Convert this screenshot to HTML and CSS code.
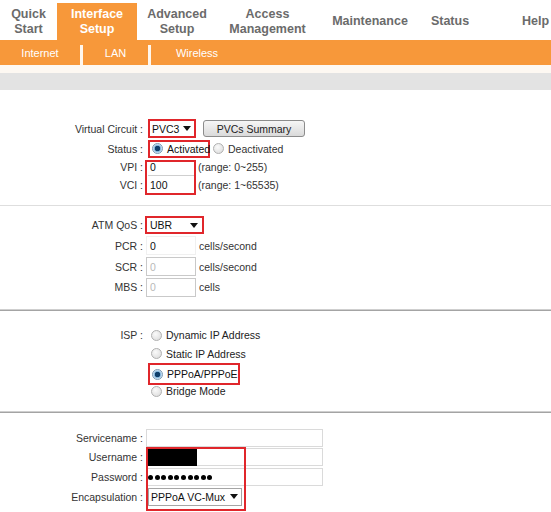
FILE: index.html
```html
<!DOCTYPE html>
<html>
<head>
<meta charset="utf-8">
<link rel="stylesheet" href="styles.css">
</head>
<body>
<div class="topnav">
  <div class="tab t1">Quick<br>Start</div>
  <div class="tab t2 active">Interface<br>Setup</div>
  <div class="tab t3">Advanced<br>Setup</div>
  <div class="tab t4">Access<br>Management</div>
  <div class="tab t5">Maintenance</div>
  <div class="tab t6">Status</div>
  <div class="tab t7">Help</div>
</div>
<div class="subnav">
  <div class="subitem s1">Internet</div>
  <div class="subsep"></div>
  <div class="subitem s2">LAN</div>
  <div class="subsep"></div>
  <div class="subitem s3">Wireless</div>
</div>
<div class="strip"></div>
<div class="graybar"></div>

<div class="sec sec1">
  <div class="row h21">
    <div class="lbl">Virtual Circuit :</div>
    <div class="fld"><div class="sel red vc"><span>PVC3</span><i class="arrow"></i></div><button class="btn">PVCs Summary</button></div>
  </div>
  <div class="row h19">
    <div class="lbl">Status :</div>
    <div class="fld"><span class="redbox status"><span class="radio on"></span>Activated</span><span class="radio deact"></span>Deactivated</div>
  </div>
  <div class="row h18">
    <div class="lbl">VPI :</div>
    <div class="fld"><span class="txt vp top">0</span><span class="hint">(range: 0~255)</span></div>
  </div>
  <div class="row h18">
    <div class="lbl">VCI :</div>
    <div class="fld"><span class="txt vp">100</span><span class="hint">(range: 1~65535)</span></div>
  </div>
  <div class="mark mark-vpi"></div>
</div>

<div class="sec sec2">
  <div class="row h20">
    <div class="lbl">ATM QoS :</div>
    <div class="fld"><div class="sel red qos"><span>UBR</span><i class="arrow"></i></div></div>
  </div>
  <div class="row h21">
    <div class="lbl">PCR :</div>
    <div class="fld"><span class="txt small pcr">0</span><span class="hint">cells/second</span></div>
  </div>
  <div class="row h21">
    <div class="lbl">SCR :</div>
    <div class="fld"><span class="txt small dis">0</span><span class="hint">cells/second</span></div>
  </div>
  <div class="row h20">
    <div class="lbl">MBS :</div>
    <div class="fld"><span class="txt small dis">0</span><span class="hint">cells</span></div>
  </div>
</div>
<div class="sep"></div>

<div class="sec sec3">
  <div class="row h18">
    <div class="lbl">ISP :</div>
    <div class="fld"><span class="opt"><span class="radio"></span>Dynamic IP Address</span></div>
  </div>
  <div class="row h19">
    <div class="lbl"></div>
    <div class="fld"><span class="opt"><span class="radio"></span>Static IP Address</span></div>
  </div>
  <div class="row h19">
    <div class="lbl"></div>
    <div class="fld"><span class="redbox pppoe"><span class="radio on"></span>PPPoA/PPPoE</span></div>
  </div>
  <div class="row h18">
    <div class="lbl"></div>
    <div class="fld"><span class="opt"><span class="radio"></span>Bridge Mode</span></div>
  </div>
</div>
<div class="sep"></div>

<div class="sec sec4">
  <div class="row h19">
    <div class="lbl">Servicename :</div>
    <div class="fld"><span class="txt wide"></span></div>
  </div>
  <div class="row h20">
    <div class="lbl">Username :</div>
    <div class="fld"><span class="txt wide"><span class="blackout"></span></span></div>
  </div>
  <div class="row h20">
    <div class="lbl">Password :</div>
    <div class="fld"><span class="txt wide"><span class="dots"><i></i><i></i><i></i><i></i><i></i><i></i><i></i><i></i><i></i><i></i></span></span></div>
  </div>
  <div class="row h19">
    <div class="lbl">Encapsulation :</div>
    <div class="fld"><div class="sel encap"><span>PPPoA VC-Mux</span><i class="arrow"></i></div></div>
  </div>
  <div class="mark mark-cred"></div>
</div>
</body>
</html>
```

FILE: styles.css
```css
html, body {
  margin: 0;
  padding: 0;
  background: #fff;
}
body {
  width: 551px;
  height: 512px;
  overflow: hidden;
  font-family: "Liberation Sans", Arial, sans-serif;
  font-size: 10.5px;
  color: #333;
}

/* top navigation */
.topnav {
  display: flex;
  height: 40px;
  width: 551px;
  overflow: hidden;
}
.tab {
  display: flex;
  align-items: center;
  justify-content: center;
  text-align: center;
  margin-top: 3px;
  font-weight: bold;
  font-size: 12.5px;
  line-height: 15px;
  color: #6b6b6b;
  flex: none;
}
.tab.active {
  background: #f7983a;
  color: #fff;
}
.t1 { width: 57px; }
.t2 { width: 80px; }
.t3 { width: 80px; }
.t4 { width: 101px; }
.t5 { width: 104px; }
.t6 { width: 56px; }
.t7 {
  width: 73px;
  box-sizing: border-box;
  justify-content: flex-start;
  padding-left: 44px;
}

.subnav {
  display: flex;
  height: 25px;
  background: #f7983a;
}
.subitem {
  display: flex;
  align-items: center;
  justify-content: center;
  color: #fff;
  font-size: 11px;
}
.s1 { width: 80px; }
.s2 { width: 65px; }
.s3 { width: 92px; }
.subsep {
  width: 3px;
  margin-top: 5px;
  background: #fff6ec;
}
.strip {
  height: 8px;
  background: #fdf8f2;
}
.graybar {
  height: 17px;
  background: #e3e3e3;
}

/* form sections */
.sec {
  position: relative;
}
.sec1 {
  padding: 28px 0 11px;
  border-bottom: 1px solid #dedede;
}
.sec2 { padding: 9px 0 12px; }
.sec3 { padding: 15px 0 11px; }
.sec4 { padding: 15px 0 0; }
.sep {
  height: 1px;
  border-top: 1px solid #cfcfcf;
  background: #a4a4a4;
}

.row {
  display: grid;
  grid-template-columns: 146px 1fr;
  align-items: center;
}
.h18 { height: 18px; }
.h19 { height: 19px; }
.h20 { height: 20px; }
.h21 { height: 21px; }
.lbl {
  text-align: right;
  padding-right: 3px;
  white-space: nowrap;
}
.fld {
  display: flex;
  align-items: center;
  white-space: nowrap;
}

/* select-like box */
.sel {
  box-sizing: border-box;
  display: flex;
  align-items: center;
  justify-content: space-between;
  background: #fff;
  border: 1px solid #a5a5a5;
  color: #111;
  padding: 0 4px 0 3px;
}
.sel.red { border: 2px solid #e0262b; }
.arrow {
  width: 0;
  height: 0;
  border-left: 4px solid transparent;
  border-right: 4px solid transparent;
  border-top: 5px solid #111;
}
.vc { margin-left: 2px; width: 48px; height: 19px; padding-left: 2px; padding-right: 3px; }
.qos { margin-left: -1px; width: 59px; height: 18px; padding-left: 3px; }
.encap { margin-left: 2px; width: 94px; height: 18px; padding-left: 2px; padding-right: 3px; }

.btn {
  box-sizing: border-box;
  margin-left: 7px;
  width: 102px;
  height: 17px;
  padding: 0;
  border: 1px solid #8c8c8c;
  border-radius: 3px;
  background: linear-gradient(#f6f6f6, #dadada);
  font-family: "Liberation Sans", Arial, sans-serif;
  font-size: 10.5px;
  color: #222;
}

/* radios */
.radio {
  box-sizing: border-box;
  display: inline-block;
  width: 11px;
  height: 11px;
  border-radius: 50%;
  border: 1px solid #b0b0b0;
  background: radial-gradient(circle at 40% 35%, #fafafa, #d8d8d8);
  margin-right: 4px;
  position: relative;
  flex: none;
}
.radio.on {
  border-color: #7a98b4;
  background: radial-gradient(circle, #0f3e6b 0 2.5px, #7fb3dc 3px, #d8e9f6 4.5px);
}
.redbox {
  box-sizing: border-box;
  display: inline-flex;
  align-items: center;
  border: 2px solid #e0262b;
}
.status {
  margin-left: 2px;
  height: 18px;
  width: 62px;
  padding-left: 2px;
  color: #111;
}
.deact { margin-left: 3px; }
.opt {
  display: inline-flex;
  align-items: center;
  margin-left: 5px;
  color: #222;
}
.pppoe {
  margin-left: 2px;
  height: 22px;
  width: 92px;
  padding-left: 2px;
  color: #111;
}

/* text inputs */
.txt {
  box-sizing: border-box;
  display: inline-flex;
  align-items: center;
  background: #fff;
  color: #111;
  padding-left: 2px;
}
.vp {
  margin-left: 2px;
  width: 47px;
  height: 17px;
  border-bottom: 1px solid #cfcfcf;
}
.small {
  width: 50px;
  height: 19px;
  padding-left: 3px;
  border: 1px solid #d6d6d6;
}
.pcr { border-color: #f0f0f0; }
.dis { color: #b9b9b9; border-color: #c9c9c9; }
.hint {
  margin-left: 3px;
  color: #333;
}
.wide {
  width: 177px;
  height: 18px;
  border: 1px solid #dadada;
  padding-left: 1px;
}
.blackout {
  width: 49px;
  height: 17px;
  background: #000;
}
.dots {
  display: flex;
  gap: 1.6px;
}
.dots i {
  width: 5px;
  height: 5px;
  border-radius: 50%;
  background: #000;
}

/* red annotation overlays */
.mark {
  position: absolute;
  box-sizing: border-box;
  border: 2px solid #e0262b;
  pointer-events: none;
}
.mark-vpi {
  left: 145px;
  top: 70px;
  width: 51px;
  height: 35px;
}
.mark-cred {
  left: 146px;
  top: 34px;
  width: 100px;
  height: 64px;
}
```
